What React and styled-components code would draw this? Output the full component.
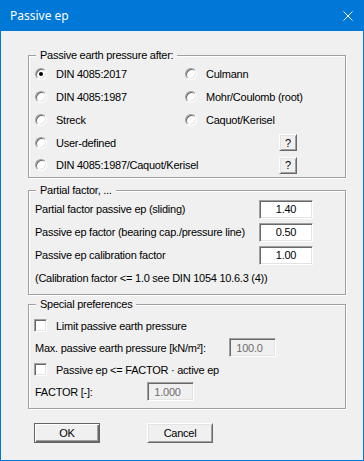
import React from "react"
import styled, { createGlobalStyle } from "styled-components"

const GlobalStyle = createGlobalStyle`
  html, body {
    margin: 0;
    padding: 0;
    background: #f0f0f0;
  }
`

const Window = styled.div`
  width: 364px;
  height: 461px;
  box-sizing: border-box;
  border: 1px solid #0078d7;
  border-top: none;
  background: #f0f0f0;
  display: flex;
  flex-direction: column;
  font-family: "Liberation Sans", Arial, sans-serif;
  font-size: 11px;
  letter-spacing: -0.25px;
  color: #000;
`

const TitleBar = styled.div`
  height: 31px;
  margin: 0 -1px;
  flex-shrink: 0;
  background: #0078d7;
  display: flex;
  align-items: center;
  justify-content: space-between;
  padding: 0 11px 0 10px;
  color: #fff;
  font-family: "Noto Sans", "Open Sans", sans-serif;
  font-size: 12px;
  letter-spacing: 0;
`

const Body = styled.div`
  display: flex;
  flex-direction: column;
  padding: 18px 17px 0 27px;
`

const Group = styled.fieldset`
  margin: ${(p) => p.$top || 0}px 0 0 0;
  padding: ${(p) => p.$pad || "1px 6px 0 6px"};
  border: 1px solid #a0a0a0;
  box-shadow: 1px 1px 0 #fff, inset 1px 1px 0 #fff;
  min-width: 0;
`

const Caption = styled.legend`
  padding: 0 4px;
  margin-left: 1px;
  line-height: 13px;
  background: #f0f0f0;
`

const RadioGrid = styled.div`
  display: grid;
  grid-template-columns: 150px 112px;
  grid-auto-rows: 22.75px;
  align-items: center;
`

const WideCell = styled.div`
  grid-column: 1 / span 2;
  display: flex;
  align-items: center;
  justify-content: space-between;
`

const Option = styled.label`
  display: flex;
  align-items: center;
  gap: 9px;
  white-space: nowrap;
`

const RadioMark = styled.span`
  box-sizing: border-box;
  width: 12px;
  height: 12px;
  border-radius: 50%;
  border: 1px solid;
  border-color: #a0a0a0 #fff #fff #a0a0a0;
  box-shadow: inset 1px 1px 0 #696969, inset -1px -1px 0 #e3e3e3;
  background: #fff;
  display: flex;
  align-items: center;
  justify-content: center;
  flex-shrink: 0;

  &::after {
    content: "";
    width: 4px;
    height: 4px;
    border-radius: 50%;
    background: ${(p) => (p.$checked ? "#000" : "transparent")};
  }
`

const CheckMark = styled.span`
  box-sizing: border-box;
  width: 13px;
  height: 13px;
  margin-left: -1px;
  border: 1px solid;
  border-color: #a0a0a0 #fff #fff #a0a0a0;
  box-shadow: inset 1px 1px 0 #696969, inset -1px -1px 0 #e3e3e3;
  background: #fff;
  flex-shrink: 0;
`

const RaisedButton = styled.button`
  box-sizing: border-box;
  width: ${(p) => p.$w}px;
  height: ${(p) => p.$h}px;
  padding: 0;
  background: #f0f0f0;
  font-family: "Liberation Sans", Arial, sans-serif;
  font-size: 11px;
  letter-spacing: -0.25px;
  color: #000;
  border: 1px solid;
  border-color: ${(p) =>
    p.$default ? "#646464" : "#fff #696969 #696969 #fff"};
  box-shadow: ${(p) =>
    p.$default
      ? "inset 1px 1px 0 #fff, inset -1px -1px 0 #696969, inset -2px -2px 0 #a0a0a0"
      : "inset 1px 1px 0 #e3e3e3, inset -1px -1px 0 #a0a0a0"};
`

const HelpButton = styled(RaisedButton)`
  margin-right: 0;
`

const Field = styled.div`
  display: flex;
  align-items: center;
  height: ${(p) => p.$h || 23}px;
`

const FieldLabel = styled.span`
  width: ${(p) => p.$w}px;
  flex-shrink: 0;
  white-space: nowrap;
`

const NumberBox = styled.input`
  box-sizing: border-box;
  width: ${(p) => p.$w}px;
  height: 19px;
  padding: 0 ${(p) => (p.disabled ? 6 : 0)}px 0 0;
  border: 1px solid;
  border-color: #a0a0a0 #fff #fff #a0a0a0;
  box-shadow: inset 1px 1px 0 #696969, inset -1px -1px 0 #e3e3e3;
  background: ${(p) => (p.disabled ? "#f0f0f0" : "#fff")};
  color: ${(p) => (p.disabled ? "#6d6d6d" : "#000")};
  font-family: "Liberation Sans", Arial, sans-serif;
  font-size: 11px;
  letter-spacing: -0.25px;
  text-align: center;
  outline: none;
`

const Note = styled.div`
  height: 22px;
  display: flex;
  align-items: center;
`

const ButtonRow = styled.div`
  display: flex;
  gap: 47px;
  margin: 14px 0 0 6px;
`

const CloseIcon = () => (
  <svg width="10" height="10" viewBox="0 0 10 10">
    <path d="M0.5 0.5 L9.5 9.5 M9.5 0.5 L0.5 9.5" stroke="#fff" strokeWidth="1" />
  </svg>
)

function Radio({ checked, children }) {
  return (
    <Option>
      <RadioMark $checked={checked} />
      {children}
    </Option>
  )
}

function Check({ children }) {
  return (
    <Option>
      <CheckMark />
      {children}
    </Option>
  )
}

export default function App() {
  return (
    <>
      <GlobalStyle />
      <Window>
        <TitleBar>
          <span>Passive ep</span>
          <CloseIcon />
        </TitleBar>
        <Body>
          <Group>
            <Caption>Passive earth pressure after:</Caption>
            <RadioGrid>
              <Radio checked>DIN 4085:2017</Radio>
              <Radio>Culmann</Radio>
              <Radio>DIN 4085:1987</Radio>
              <Radio>Mohr/Coulomb (root)</Radio>
              <Radio>Streck</Radio>
              <Radio>Caquot/Kerisel</Radio>
              <WideCell>
                <Radio>User-defined</Radio>
                <HelpButton $w={18} $h={17}>?</HelpButton>
              </WideCell>
              <WideCell>
                <Radio>DIN 4085:1987/Caquot/Kerisel</Radio>
                <HelpButton $w={18} $h={17}>?</HelpButton>
              </WideCell>
            </RadioGrid>
          </Group>

          <Group $top={6} $pad="1px 6px 5px 6px">
            <Caption>Partial factor, ...</Caption>
            <Field>
              <FieldLabel $w={224}>Partial factor passive ep (sliding)</FieldLabel>
              <NumberBox $w={54} defaultValue="1.40" />
            </Field>
            <Field>
              <FieldLabel $w={224}>Passive ep factor (bearing cap./pressure line)</FieldLabel>
              <NumberBox $w={54} defaultValue="0.50" />
            </Field>
            <Field>
              <FieldLabel $w={224}>Passive ep calibration factor</FieldLabel>
              <NumberBox $w={54} defaultValue="1.00" />
            </Field>
            <Note>(Calibration factor &lt;= 1.0 see DIN 1054 10.6.3 (4))</Note>
          </Group>

          <Group $top={3} $pad="4px 6px 5px 6px">
            <Caption>Special preferences</Caption>
            <Field $h={22}>
              <Check>Limit passive earth pressure</Check>
            </Field>
            <Field $h={22}>
              <FieldLabel $w={194}>Max. passive earth pressure [kN/m²]:</FieldLabel>
              <NumberBox $w={47} disabled defaultValue="100.0" />
            </Field>
            <Field $h={22}>
              <Check>Passive ep &lt;= FACTOR · active ep</Check>
            </Field>
            <Field $h={22}>
              <FieldLabel $w={112}>FACTOR [-]:</FieldLabel>
              <NumberBox $w={47} disabled defaultValue="1.000" />
            </Field>
          </Group>

          <ButtonRow>
            <RaisedButton $w={66} $h={20} $default>OK</RaisedButton>
            <RaisedButton $w={66} $h={20}>Cancel</RaisedButton>
          </ButtonRow>
        </Body>
      </Window>
    </>
  )
}
